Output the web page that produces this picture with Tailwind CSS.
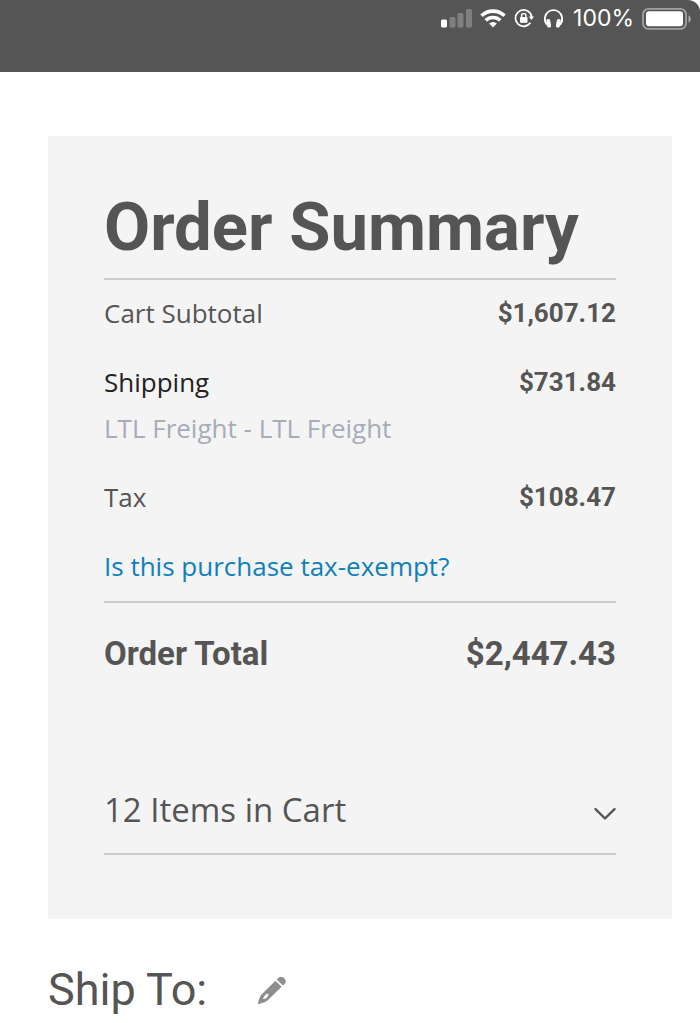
<!DOCTYPE html>
<html lang="en">
  <head>
    <meta charset="UTF-8" />
    <meta name="viewport" content="width=device-width, initial-scale=1.0" />
    <script src="https://cdn.jsdelivr.net/npm/@tailwindcss/browser@4"></script>
    <title>Order Summary</title>
  </head>

  <body class="bg-white font-['Open_Sans',sans-serif] text-[#555]">
    <!-- status bar -->
    <div class="bg-white">
      <div class="flex h-[72px] items-start justify-end gap-2 rounded-tr-xl bg-[#555] pt-2 pr-2 text-white">
        <svg class="mt-px h-5 w-[31px]" viewBox="0 0 31 20" fill="currentColor" aria-hidden="true">
          <rect x="0" y="10.5" width="6" height="8" rx="1.5" />
          <g opacity=".25">
            <rect x="8.5" y="8" width="6" height="10.5" rx="1.5" />
            <rect x="16.5" y="4" width="6" height="14.5" rx="1.5" />
            <rect x="25" y="0" width="6" height="18.5" rx="1.5" />
          </g>
        </svg>
        <svg class="mt-px h-5 w-[26px]" viewBox="0 0 26 20" fill="none" stroke="currentColor" stroke-width="3.6" aria-hidden="true">
          <path d="M1.5 6.8a16.5 16.5 0 0 1 23 0" />
          <path d="M5.7 11.4a10.5 10.5 0 0 1 14.6 0" />
          <path d="M13 18.6l-3.9-4a5.6 5.6 0 0 1 7.800 0z" fill="currentColor" stroke="none" />
        </svg>
        <svg class="h-5 w-[20px]" viewBox="0 0 20 20" aria-hidden="true">
          <path d="M16 4.900A8.200 8.200 0 1 0 16.400 14.800" fill="none" stroke="currentColor" stroke-width="1.8" />
          <path d="M16 4.9a8 8 0 0 1 1.6 4" fill="none" stroke="currentColor" stroke-width="1.8" />
          <path d="M14.8 8.5h5.200l-2.600 3.500z" fill="currentColor" />
          <rect x="6" y="9" width="7.5" height="5.8" rx=".8" fill="currentColor" />
          <path d="M7.6 9.500V7.600a2.150 2.150 0 0 1 4.300 0v1.900" fill="none" stroke="currentColor" stroke-width="1.4" />
        </svg>
        <svg class="ml-[2px] h-5 w-[19px]" viewBox="0 0 19 20" aria-hidden="true">
          <path d="M3.200 17C.3 13.500.8 9.800 1.200 8.500a8.600 8.600 0 0 1 16.600 0c.4 1.300.9 5-2 8.500" fill="none" stroke="currentColor" stroke-width="1.9" />
          <rect x="2.6" y="11" width="4" height="8.6" rx="1.8" transform="rotate(-10 4.600 15)" fill="currentColor" />
          <rect x="12.4" y="11" width="4" height="8.6" rx="1.8" transform="rotate(10 14.400 15)" fill="currentColor" />
        </svg>
        <span class="pl-[2px] font-[Inter,sans-serif] text-[23px] leading-5">100%</span>
        <svg class="h-[22px] w-[50px]" viewBox="0 0 50 22" aria-hidden="true">
          <rect x="1" y="0.9" width="43" height="20" rx="5.5" fill="none" stroke="#fff" stroke-opacity=".45" stroke-width="1.8" />
          <rect x="4" y="3.3" width="37" height="15" rx="3" fill="#fff" />
          <path d="M46.5 7.200c3 1.500 3 6 0 7.500z" fill="#fff" fill-opacity=".5" />
        </svg>
      </div>
    </div>

    <main class="pt-16 pr-7 pb-1 pl-12">
      <section class="bg-[#f4f4f4] px-14 pt-14 pb-16">
        <h1 class="border-b-2 border-[#ccc] pb-4 font-[Roboto,sans-serif] text-[67px] leading-[70px] font-bold">
          Order Summary
        </h1>

        <dl class="flex flex-col gap-[23px] pt-[10px] text-[26px] leading-[46px]">
          <div class="flex justify-between">
            <dt>Cart Subtotal</dt>
            <dd class="font-[Roboto,sans-serif] font-bold">$1,607.12</dd>
          </div>
          <div class="flex justify-between">
            <dt class="text-[#222]">
              Shipping
              <span class="block text-[#a6acb8]">LTL Freight - LTL Freight</span>
            </dt>
            <dd class="font-[Roboto,sans-serif] font-bold">$731.84</dd>
          </div>
          <div class="flex justify-between">
            <dt>Tax</dt>
            <dd class="font-[Roboto,sans-serif] font-bold">$108.47</dd>
          </div>
        </dl>
        <a href="#" class="mt-[23px] block text-[26px] leading-[46px] text-[#0f80bb]">Is this purchase tax-exempt?</a>

        <div class="mt-3 flex justify-between border-t-2 border-[#ccc] pt-7 font-[Roboto,sans-serif] text-[33px] leading-[46px] font-bold">
          <span>Order Total</span>
          <span>$2,447.43</span>
        </div>

        <!-- cart items toggle -->
        <button
          type="button"
          class="mt-[110px] flex w-full items-center justify-between border-b-2 border-[#ccc] pb-5 text-left text-[33px] leading-[46px]"
        >
          12 Items in Cart
          <svg class="mt-2 h-3 w-[22px]" viewBox="0 0 22 12" fill="none" stroke="currentColor" stroke-width="2.4" stroke-linecap="round" stroke-linejoin="round" aria-hidden="true">
            <path d="M1.500 1.200 11 10.500l9.500-9.300" />
          </svg>
        </button>
      </section>

      <div class="flex items-center gap-[50px] pt-11">
        <h2 class="font-[Roboto,sans-serif] text-[45px] leading-[54px]">Ship To:</h2>
        <button type="button" aria-label="Edit shipping address" class="text-[#8e8e8e]">
          <svg class="h-[30px] w-[30px]" viewBox="0 0 30 30" fill="currentColor" aria-hidden="true">
            <path d="M21.500 2.800c2-1.700 4-1.500 5.800.4 1.800 1.800 2 3.900.3 5.700l-1.700 1.700-6.200-6z" />
            <path fill-rule="evenodd" d="M18.400 5.800l6.200 6L10.500 25.500c-1.700 1.600-5.800 2.800-9.700 3.700.8-4 1.900-7.700 3.500-9.500zM6 24c1.500.3 3.400-.5 4.400-1.900 1-1.300 1.300-2.700.7-3.600-2.200.4-4.200 2.300-5.100 5.500z" />
          </svg>
        </button>
      </div>
    </main>
  </body>
</html>
